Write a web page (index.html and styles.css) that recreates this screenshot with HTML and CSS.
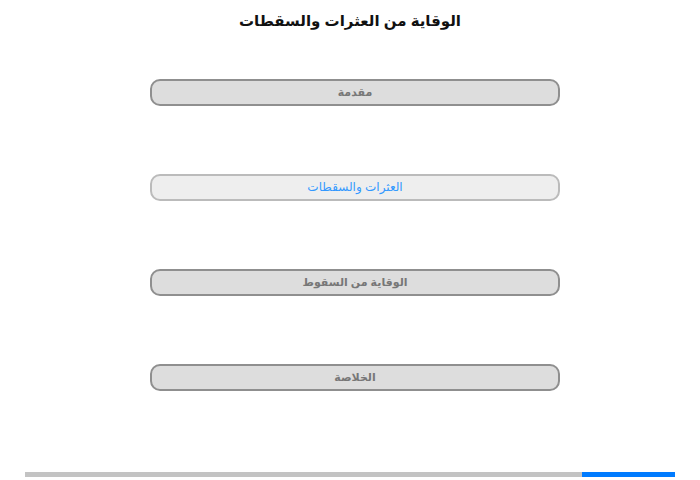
FILE: index.html
```html
<!DOCTYPE html>
<html lang="ar" dir="rtl">

<head>
    <meta charset="utf-8">
    <link rel="stylesheet" href="styles.css">
</head>

<body>
    <div class="page">
        <h1 class="title">الوقاية من العثرات والسقطات</h1>

        <div class="menu">
            <div class="item">مقدمة</div>
            <div class="item active">العثرات والسقطات</div>
            <div class="item">الوقاية من السقوط</div>
            <div class="item">الخلاصة</div>
        </div>

        <div class="progress">
            <div class="progress-done"></div>
        </div>
    </div>
</body>

</html>
```

FILE: styles.css
```css
body {
    font-family: Arial, "Liberation Sans", "DejaVu Sans", sans-serif;
    background-color: #FFFFFF;
    margin: 0;
    padding: 0;
}

.page {
    display: flex;
    flex-direction: column;
    height: 480px;
}

.title {
    font-size: 15px;
    font-weight: bold;
    color: #111111;
    text-align: center;
    margin: 9px 0 0 0;
    height: 24px;
    line-height: 24px;
}

.menu {
    display: flex;
    flex-direction: column;
    gap: 68px;
    width: 410px;
    margin: 46px 140px 0 0;
    align-self: flex-start;
}

.item {
    box-sizing: border-box;
    height: 27px;
    line-height: 23px;
    border: 2px solid #8F8F8F;
    border-radius: 10px;
    background-color: #DDDDDD;
    color: #777777;
    font-size: 11px;
    font-weight: bold;
    text-align: center;
}

.item.active {
    background-color: #EEEEEE;
    border-color: #BBBBBB;
    color: #3399FF;
    font-size: 12px;
    font-weight: normal;
}

.progress {
    display: flex;
    flex-direction: row;
    height: 5px;
    margin: auto 25px 3px 25px;
    background-color: #C3C3C3;
}

.progress-done {
    width: 93px;
    background-color: #007BFF;
}
```
